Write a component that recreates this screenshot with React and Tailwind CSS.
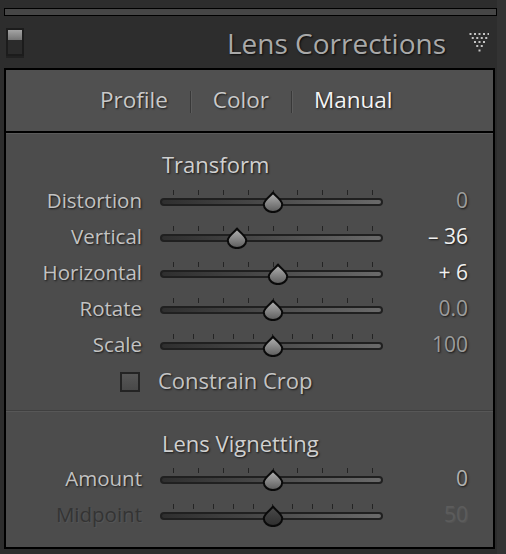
import React from "react";

const font = { fontFamily: '"Open Sans", "Liberation Sans", sans-serif' };

const transformRows = [
  { label: "Distortion", value: "0", pos: 0, ticks: 9 },
  { label: "Vertical", value: "– 36", pos: -36, ticks: 9, bright: true },
  { label: "Horizontal", value: "+ 6", pos: 6, ticks: 9, bright: true },
  { label: "Rotate", value: "0.0", pos: 0, ticks: 9 },
  { label: "Scale", value: "100", pos: 0, ticks: 11 },
];

const vignetteRows = [
  { label: "Amount", value: "0", pos: 0, ticks: 9, mid: true },
  { label: "Midpoint", value: "50", pos: 0, ticks: 11, disabled: true },
];

function Thumb({ dark }) {
  const id = dark ? "thumbDark" : "thumbLight";
  return (
    <svg width="22" height="22" viewBox="0 0 22 22">
      <defs>
        <linearGradient id={id} x1="0" y1="0" x2="0" y2="1">
          <stop offset="0" stopColor={dark ? "#4a4a4a" : "#b4b4b4"} />
          <stop offset="1" stopColor={dark ? "#2e2e2e" : "#5c5c5c"} />
        </linearGradient>
      </defs>
      <path
        d="M11 1.5 C12.5 4.5 20.2 8.5 20.2 13.5 A9.2 7.6 0 0 1 1.8 13.5 C1.8 8.5 9.5 4.5 11 1.5 Z"
        fill={`url(#${id})`}
        stroke="#0a0a0a"
        strokeWidth="2"
        strokeLinejoin="round"
      />
    </svg>
  );
}

function Slider({ pos, ticks, disabled }) {
  const center = 13 + ((pos + 100) / 200) * 199;
  return (
    <div className="relative w-[223px] h-9 shrink-0">
      <div className="absolute left-[13px] top-[6px] w-[200px] h-[5px] flex justify-between">
        {Array.from({ length: ticks }).map((_, i) => (
          <span key={i} className="w-px h-full bg-[#242424]" />
        ))}
      </div>
      <div className="absolute left-0 right-0 top-[14px] h-[8px] rounded-full border-2 border-[#202020] bg-linear-to-r from-[#2f2f2f] to-[#6a6a6a]" />
      <div className="absolute top-[7px]" style={{ left: center - 11 }}>
        <Thumb dark={disabled} />
      </div>
    </div>
  );
}

function Row({ row }) {
  const labelColor = row.disabled ? "text-[#343434]" : "text-[#c2c2c2]";
  const valueColor = row.disabled
    ? "text-[#5c5c5c]"
    : row.bright
    ? "text-[#f0f0f0]"
    : row.mid
    ? "text-[#b0b0b0]"
    : "text-[#9c9c9c]";
  const shadow = row.disabled
    ? "[text-shadow:1px_1px_1px_rgba(255,255,255,0.06)]"
    : "[text-shadow:1px_1px_2px_rgba(0,0,0,0.7)]";
  return (
    <div className="flex items-center h-9 text-[20.5px]">
      <div className={`w-[136px] shrink-0 text-right pb-1 leading-9 ${labelColor} ${shadow}`}>
        {row.label}
      </div>
      <div className="ml-[18px]">
        <Slider pos={row.pos} ticks={row.ticks} disabled={row.disabled} />
      </div>
      <div className={`w-[85px] shrink-0 text-right pb-1 leading-9 text-[21px] ${valueColor} ${shadow}`}>
        {row.value}
      </div>
    </div>
  );
}

function Heading({ children }) {
  return (
    <div className="h-[28px] pl-[156px] text-[22px] leading-[28px] text-[#d0d0d0] [text-shadow:1px_1px_2px_rgba(0,0,0,0.7)]">
      {children}
    </div>
  );
}

function PanelIcon() {
  const rows = [5, 4, 3, 2, 1];
  const ys = [1, 5, 9, 13, 17.5];
  return (
    <svg width="20" height="20" viewBox="0 0 20 20">
      {rows.map((count, r) =>
        Array.from({ length: count }).map((_, i) => (
          <rect
            key={`${r}-${i}`}
            x={0.5 + r * 2.25 + i * 4.5}
            y={ys[r]}
            width="2"
            height="2"
            fill="#c4c4c4"
          />
        ))
      )}
    </svg>
  );
}

export default function App() {
  return (
    <div className="w-[506px] h-[554px] bg-[#2d2d2d] flex overflow-hidden" style={font}>
      <div className="w-[497px] pl-1 pt-2">
        <div className="h-[8px] border border-black bg-[#464646]" />

        <div className="h-[52px] flex items-center pr-[8px]">
          <div className="ml-[2px] w-[18px] h-[28px] border-2 border-[#1c1c1c] bg-[#2b2b2b] shadow-[0_2px_0_rgba(0,0,0,0.25)]">
            <div className="h-[10px] bg-linear-to-b from-[#a4a4a4] to-[#757575]" />
          </div>
          <div className="flex-1" />
          <div className="pt-[1px] text-[28px] leading-none text-[#a9a9a9] [text-shadow:1px_1px_2px_rgba(0,0,0,0.8)]">
            Lens Corrections
          </div>
          <div className="ml-[23px]">
            <PanelIcon />
          </div>
        </div>

        <div className="w-[491px] h-[481px] border-2 border-black bg-[#4c4c4c] flex flex-col">
          <div className="h-[61px] bg-[#505050] flex items-center pl-[94px] gap-[22px] text-[22.5px] pb-[2px] [text-shadow:1px_1px_2px_rgba(0,0,0,0.7)]">
            <span className="text-[#c9c9c9]">Profile</span>
            <span className="w-px h-[22px] bg-[#383838] shadow-[1px_0_0_#5c5c5c] mt-[4px]" />
            <span className="text-[#c9c9c9]">Color</span>
            <span className="w-px h-[22px] bg-[#383838] shadow-[1px_0_0_#5c5c5c] mt-[4px]" />
            <span className="text-[#f4f4f4]">Manual</span>
          </div>
          <div className="h-[2px] bg-black" />
          <div className="h-px bg-[#5a5a5a]" />

          <div className="pt-4">
            <Heading>Transform</Heading>
            <div className="mt-[6px]">
              {transformRows.map((row) => (
                <Row key={row.label} row={row} />
              ))}
            </div>
            <div className="h-9 flex items-center pl-[114px]">
              <div className="w-[20px] h-[20px] border-2 border-[#242424] bg-linear-to-b from-[#575757] to-[#494949]" />
              <span className="ml-[18px] pb-1 text-[22px] text-[#c4c4c4] [text-shadow:1px_1px_2px_rgba(0,0,0,0.7)]">
                Constrain Crop
              </span>
            </div>
            <div className="mt-[10px] h-px bg-[#3f3f3f]" />
            <div className="h-px bg-[#575757]" />
            <div className="pt-[17px]">
              <Heading>Lens Vignetting</Heading>
            </div>
            <div className="mt-[5px]">
              {vignetteRows.map((row) => (
                <Row key={row.label} row={row} />
              ))}
            </div>
          </div>
        </div>
      </div>
      <div className="flex-1 bg-[#333333]" />
    </div>
  );
}
